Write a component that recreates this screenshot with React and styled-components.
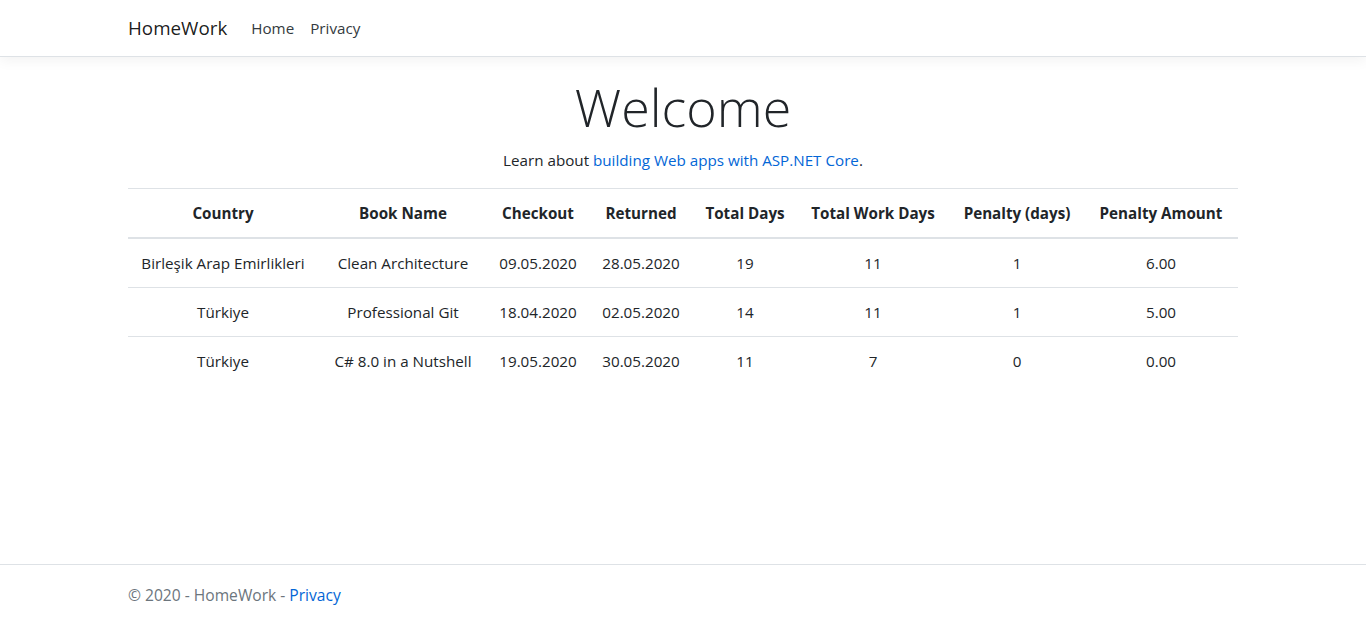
import React from "react";
import styled, { createGlobalStyle } from "styled-components";

const GlobalStyle = createGlobalStyle`
  html, body {
    margin: 0;
    padding: 0;
  }
  body {
    font-family: "Open Sans", "Noto Sans", "Liberation Sans", sans-serif;
    font-size: 15.2px;
    line-height: 24px;
    color: #212529;
    background: #fff;
  }
  * {
    box-sizing: border-box;
  }
`;

const Page = styled.div`
  min-height: 100vh;
  display: flex;
  flex-direction: column;
`;

const Container = styled.div`
  width: 1140px;
  margin: 0 auto;
  padding: 0 15px;
`;

const Header = styled.header`
  background: #fff;
  border-bottom: 1px solid #dee2e6;
  box-shadow: 0 0.25rem 0.75rem rgba(0, 0, 0, 0.05);
  margin-bottom: 16px;
`;

const Navbar = styled.nav`
  display: flex;
  align-items: center;
  padding: 8px 0;
`;

const Brand = styled.a`
  font-size: 18.8px;
  line-height: 30px;
  padding: 5px 0;
  margin-right: 16px;
  color: rgba(0, 0, 0, 0.9);
  text-decoration: none;
`;

const NavList = styled.ul`
  display: flex;
  list-style: none;
  margin: 0;
  padding: 0;
`;

const NavLink = styled.a`
  display: block;
  padding: 8px;
  color: #343a40;
  text-decoration: none;
`;

const Main = styled.main`
  flex: 1;
  padding-bottom: 16px;
`;

const Center = styled.div`
  text-align: center;
`;

const Title = styled.h1`
  font-size: 52px;
  font-weight: 300;
  line-height: 67px;
  margin: 0 0 8px;
`;

const Lead = styled.p`
  margin: 0 0 16px;
`;

const Link = styled.a`
  color: #0366d6;
  text-decoration: none;
`;

const Table = styled.table`
  width: 100%;
  border-collapse: collapse;
  table-layout: fixed;
  color: #212529;
`;

const Th = styled.th`
  padding: 12px 0;
  font-weight: 700;
  text-align: center;
  border-top: 1px solid #dee2e6;
  border-bottom: 2px solid #dee2e6;
  white-space: nowrap;
`;

const Td = styled.td`
  padding: 12px 0;
  text-align: center;
  border-top: 1px solid #dee2e6;
  white-space: nowrap;
`;

const Footer = styled.footer`
  border-top: 1px solid #dee2e6;
  color: #6c757d;
  font-size: 15.6px;
  line-height: 60px;
  white-space: nowrap;
`;

const columns = [
  { label: "Country", width: 190 },
  { label: "Book Name", width: 170 },
  { label: "Checkout", width: 100 },
  { label: "Returned", width: 106 },
  { label: "Total Days", width: 102 },
  { label: "Total Work Days", width: 154 },
  { label: "Penalty (days)", width: 134 },
  { label: "Penalty Amount", width: 154 },
];

const rows = [
  ["Birleşik Arap Emirlikleri", "Clean Architecture", "09.05.2020", "28.05.2020", "19", "11", "1", "6.00"],
  ["Türkiye", "Professional Git", "18.04.2020", "02.05.2020", "14", "11", "1", "5.00"],
  ["Türkiye", "C# 8.0 in a Nutshell", "19.05.2020", "30.05.2020", "11", "7", "0", "0.00"],
];

export default function App() {
  return (
    <Page>
      <GlobalStyle />
      <Header>
        <Container>
          <Navbar>
            <Brand href="#">HomeWork</Brand>
            <NavList>
              <li>
                <NavLink href="#">Home</NavLink>
              </li>
              <li>
                <NavLink href="#">Privacy</NavLink>
              </li>
            </NavList>
          </Navbar>
        </Container>
      </Header>
      <Main>
        <Container>
          <Center>
            <Title>Welcome</Title>
            <Lead>
              Learn about <Link href="#">building Web apps with ASP.NET Core</Link>.
            </Lead>
          </Center>
          <Table>
            <colgroup>
              {columns.map((c) => (
                <col key={c.label} style={{ width: c.width }} />
              ))}
            </colgroup>
            <thead>
              <tr>
                {columns.map((c) => (
                  <Th key={c.label}>{c.label}</Th>
                ))}
              </tr>
            </thead>
            <tbody>
              {rows.map((r, i) => (
                <tr key={i}>
                  {r.map((cell, j) => (
                    <Td key={j}>{cell}</Td>
                  ))}
                </tr>
              ))}
            </tbody>
          </Table>
        </Container>
      </Main>
      <Footer>
        <Container>
          © 2020 - HomeWork - <Link href="#">Privacy</Link>
        </Container>
      </Footer>
    </Page>
  );
}
